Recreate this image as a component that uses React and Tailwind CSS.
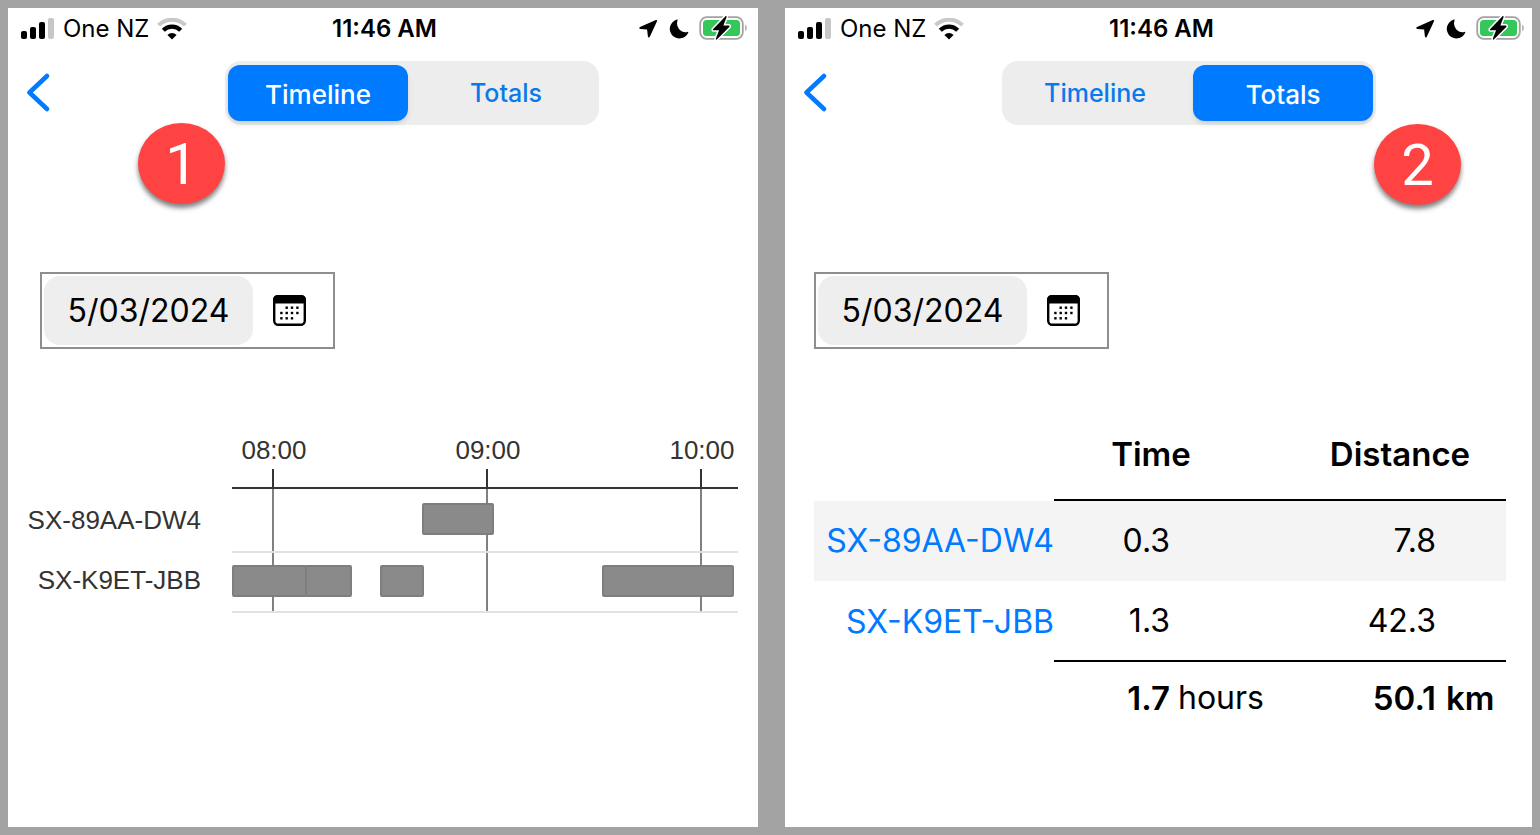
import React from 'react';

function SignalIcon() {
  return (
    <svg className="h-[22px] w-[34px]" viewBox="0 0 34 22" aria-hidden="true">
      <rect x="0" y="13" width="6" height="8" rx="2" />
      <rect x="9" y="9" width="6" height="12" rx="2" />
      <rect x="18" y="4" width="6" height="17" rx="2" />
      <rect x="27" y="0" width="6" height="21" rx="2" fill="#c7c7c7" />
    </svg>
  );
}

function WifiIcon() {
  return (
    <svg className="h-[22px] w-[30px]" viewBox="0 0 30 22" fill="none" aria-hidden="true">
      <path d="M1.600 7.200a19 19 0 0 1 26.800 0" stroke="#c9c9c9" strokeWidth="4" />
      <path d="M6.300 12.200a12.200 12.200 0 0 1 17.400 0" stroke="#000" strokeWidth="4.200" />
      <path d="M15 21.500l-4.600-4.600a6.500 6.500 0 0 1 9.200 0z" fill="#000" />
    </svg>
  );
}

function StatusIcons() {
  return (
    <svg className="h-[26px] w-[109px]" viewBox="0 0 109 26" aria-hidden="true">
      <path d="M18 5.300c.4-1.100-.2-1.600-1.200-1.200L1 10.900c-1.200.6-1 1.900.4 2l6.700.6.8 6.900c.2 1.300 1.400 1.500 1.900.3z" />
      <path d="M37.900 3.600c.6-.2.9.2.6.8C36.500 10.500 41.500 17.500 48.400 15.900c.7-.2 1.100.2.8.8A9.600 9.600 0 1 1 37.900 3.600z" />
      <rect x="61.200" y="1.200" width="42.600" height="21.600" rx="6.500" fill="none" stroke="#a2a2a2" strokeWidth="1.800" />
      <rect x="64" y="4" width="37" height="16" rx="3.500" fill="#34c759" />
      <path d="M106.300 8.600c1.800.7 1.800 6.100 0 6.800z" fill="#9a9a9a" />
      <path d="M86.300.4L74.200 12.900c-.6.7-.3 1.400.5 1.400h5.400l-3.200 8.300c-.3 1 .5 1.400 1.200.7L90.300 10.900c.6-.7.300-1.400-.5-1.400h-5.400l3.200-8.400c.3-1-.6-1.400-1.300-.7z" stroke="#fff" strokeWidth="3" paintOrder="stroke" />
    </svg>
  );
}

function StatusBar({ className }) {
  return (
    <div className={`grid h-[42px] grid-cols-[1fr_auto_1fr] items-center pl-[13px] text-2xl leading-8 ${className}`}>
      <div className="flex items-center gap-2">
        <SignalIcon />
        <span>One NZ</span>
        <WifiIcon />
      </div>
      <span className="font-semibold">11:46 AM</span>
      <div className="flex justify-end">
        <StatusIcons />
      </div>
    </div>
  );
}

function Header({ active }) {
  return (
    <header className="mt-[11px] flex items-center">
      <button type="button" aria-label="Back" className="ml-[18px] shrink-0">
        <svg className="h-10 w-[24px]" viewBox="0 0 24 40" fill="none" aria-hidden="true">
          <path d="M21 3L3.500 19.500L21 36" stroke="#007aff" strokeWidth="4.500" strokeLinecap="round" strokeLinejoin="round" />
        </svg>
      </button>
      <div role="tablist" className="ml-[175px] grid h-16 w-[374px] grid-cols-2 gap-2 rounded-2xl bg-[#ededed] px-[3px] py-1">
        {['Timeline', 'Totals'].map((name) => (
          <button
            key={name}
            type="button"
            role="tab"
            aria-selected={name === active}
            className={
              name === active
                ? 'rounded-xl bg-[#007aff] pt-[2px] text-[26px] font-medium text-white shadow-md'
                : 'rounded-xl pt-[2px] text-[25px] font-medium text-[#0a7aea]'
            }
          >
            {name}
          </button>
        ))}
      </div>
    </header>
  );
}

function Badge({ number, className }) {
  return (
    <div
      className={`absolute flex h-[81px] w-[87px] items-center justify-center rounded-[50%] bg-[#ff4343] font-['Roboto',sans-serif] text-[58px] leading-none text-white shadow-[0_4px_5px_rgba(0,0,0,0.5)] ${className}`}
    >
      {number}
    </div>
  );
}

const DOTS = [
  [13.7, 12.7], [19, 12.7], [24.4, 12.7],
  [8.4, 18], [13.7, 18], [19, 18], [24.4, 18],
  [8.4, 23.3], [13.7, 23.3], [19, 23.3],
];

function DateField() {
  return (
    <div className="flex h-[77px] w-[295px] items-center border-2 border-[#8e8e8e] p-[2px]">
      <input
        type="text"
        aria-label="Date"
        defaultValue="5/03/2024"
        className="h-[69px] w-[209px] rounded-2xl bg-[#eeeeee] text-center text-[32px]"
      />
      <button type="button" aria-label="Open calendar" className="ml-5">
        <svg className="h-[31px] w-[33px]" viewBox="0 0 33 31" aria-hidden="true">
          <rect x="1.200" y="1.200" width="30.600" height="28.600" rx="4" fill="none" stroke="#000" strokeWidth="2.400" />
          <path d="M0 8.500V4.500a4.500 4.500 0 0 1 4.500-4.500h24a4.500 4.500 0 0 1 4.500 4.500v4z" />
          {DOTS.map(([x, y]) => (
            <rect key={`${x}-${y}`} x={x - 1.2} y={y - 1.2} width="2.400" height="2.400" />
          ))}
        </svg>
      </button>
    </div>
  );
}

const TICKS = [
  { x: 265, label: '08:00' },
  { x: 479, label: '09:00' },
  { x: 693, label: '10:00' },
];

const TRIPS = [
  { x: 414, y: 73, width: 72 },
  { x: 224, y: 135, width: 75 },
  { x: 297, y: 135, width: 47 },
  { x: 372, y: 135, width: 44 },
  { x: 594, y: 135, width: 132 },
];

function Timeline() {
  return (
    <svg
      className="mt-[81px] w-full font-['Liberation_Sans',sans-serif] text-[26px]"
      viewBox="0 0 750 190"
      role="img"
      aria-label="Timeline by device"
    >
      <g fill="#333">
        {TICKS.map((t) => (
          <text key={t.label} x={t.x + 1} y="29" textAnchor="middle">{t.label}</text>
        ))}
        <text x="193" y="99" textAnchor="end">SX-89AA-DW4</text>
        <text x="193" y="159" textAnchor="end">SX-K9ET-JBB</text>
      </g>
      {TICKS.map((t) => (
        <g key={t.label}>
          <rect x={t.x - 1} y="39" width="2" height="19" fill="#333" />
          <rect x={t.x - 1} y="58" width="2" height="123" fill="#808080" />
        </g>
      ))}
      <rect x="224" y="57" width="506" height="2" fill="#333" />
      <rect x="224" y="121" width="506" height="2" fill="#e2e2e2" />
      <rect x="224" y="181" width="506" height="2" fill="#e2e2e2" />
      {TRIPS.map((t) => (
        <rect
          key={`${t.x}-${t.y}`}
          x={t.x + 1}
          y={t.y + 1}
          width={t.width - 2}
          height="30"
          rx="1"
          fill="#8a8a8a"
          stroke="#7e7e7e"
          strokeWidth="2"
        />
      ))}
    </svg>
  );
}

const ROWS = [
  { id: 'SX-89AA-DW4', time: '0.3', distance: '7.8' },
  { id: 'SX-K9ET-JBB', time: '1.3', distance: '42.3' },
];

function Totals() {
  return (
    <div className="mt-[59px] pl-[29px] pr-[26px]">
      <table className="w-full table-fixed border-separate border-spacing-0 text-[32px] leading-10">
        <colgroup>
          <col className="w-[240px]" />
          <col className="w-[116px]" />
          <col className="w-[124px]" />
          <col />
          <col className="w-[70px]" />
        </colgroup>
        <thead>
          <tr className="h-[93px] text-[33px]">
            <td />
            <th colSpan="2" className="border-b-2 border-black pr-[46px] text-center font-semibold">Time</th>
            <th colSpan="2" className="border-b-2 border-black text-center font-semibold">Distance</th>
          </tr>
        </thead>
        <tbody>
          {ROWS.map((r) => (
            <tr key={r.id} className="h-20 odd:bg-[#f4f4f4] last:h-[81px] last:[&>td]:border-b-2 last:[&>td]:border-black">
              <th scope="row" className="whitespace-nowrap text-right font-normal">
                <a href="#device" className="text-[#007aff]">{r.id}</a>
              </th>
              <td className="text-right">{r.time}</td>
              <td />
              <td className="text-right">{r.distance}</td>
              <td />
            </tr>
          ))}
        </tbody>
        <tfoot>
          <tr className="h-[72px]">
            <td />
            <td className="text-right text-[33px] font-semibold">1.7</td>
            <td className="pl-2">hours</td>
            <td className="text-right text-[33px] font-semibold">50.1</td>
            <td className="pl-[10px] text-[33px] font-semibold">km</td>
          </tr>
        </tfoot>
      </table>
    </div>
  );
}

export default function App() {
  return (
    <main className="grid min-h-screen grid-cols-[750fr_747fr] gap-[27px] bg-[#a3a3a3] p-2 font-['Inter',sans-serif] text-black">
      <section className="relative min-w-0 bg-white">
        <StatusBar className="pr-[10px]" />
        <Header active="Timeline" />
        <Badge number="1" className="left-[130px] top-[115px]" />
        <div className="mt-[147px] pl-8">
          <DateField />
        </div>
        <Timeline />
      </section>
      <section className="relative min-w-0 bg-white">
        <StatusBar className="pr-[7px]" />
        <Header active="Totals" />
        <Badge number="2" className="right-[71px] top-[116px]" />
        <div className="mt-[147px] pl-[29px]">
          <DateField />
        </div>
        <Totals />
      </section>
    </main>
  );
}
